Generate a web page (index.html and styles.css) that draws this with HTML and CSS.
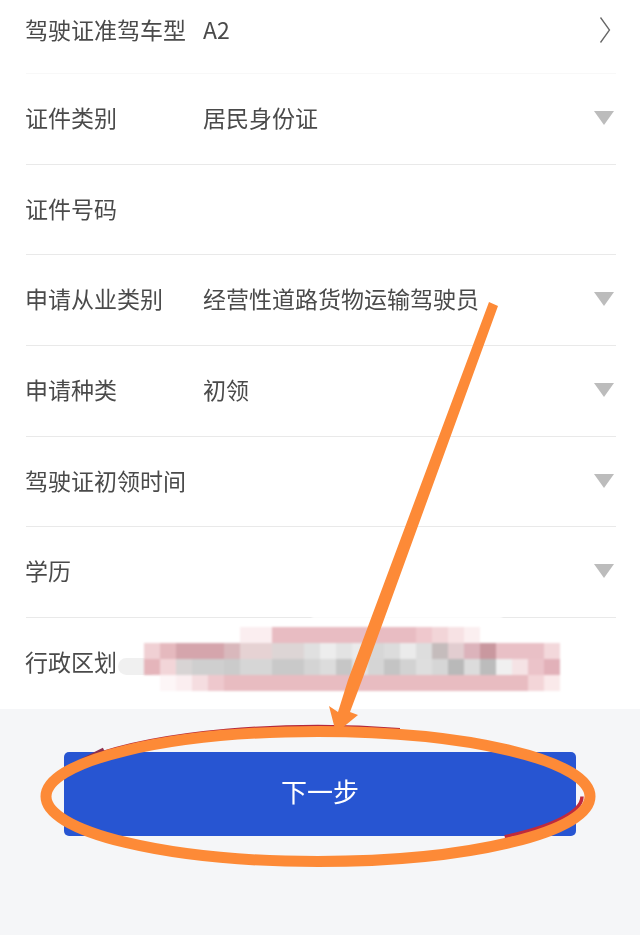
FILE: index.html
```html
<!DOCTYPE html>
<html lang="zh-CN">
<head>
    <meta charset="UTF-8">
    <meta name="viewport" content="width=device-width, initial-scale=1.0">
    <title>从业资格申请</title>
    <link rel="stylesheet" href="styles.css">
</head>
<body>
    <div class="page">
        <form class="apply-form">
            <div class="form-row first-row">
                <span class="row-label">驾驶证准驾车型</span>
                <span class="row-value">A2</span>
                <svg class="chevron" width="12" height="28" viewBox="0 0 12 28"><path d="M1.5 1.5 L10.5 14 L1.5 26.5" fill="none" stroke="#666" stroke-width="1.3"/></svg>
            </div>
            <div class="form-row">
                <span class="row-label">证件类别</span>
                <span class="row-value">居民身份证</span>
                <span class="caret"></span>
            </div>
            <div class="form-row">
                <span class="row-label">证件号码</span>
            </div>
            <div class="form-row">
                <span class="row-label">申请从业类别</span>
                <span class="row-value">经营性道路货物运输驾驶员</span>
                <span class="caret"></span>
            </div>
            <div class="form-row">
                <span class="row-label">申请种类</span>
                <span class="row-value">初领</span>
                <span class="caret"></span>
            </div>
            <div class="form-row">
                <span class="row-label">驾驶证初领时间</span>
                <span class="caret"></span>
            </div>
            <div class="form-row">
                <span class="row-label">学历</span>
                <span class="caret"></span>
            </div>
            <div class="form-row">
                <span class="row-label">行政区划</span>
            </div>
        </form>

        <div class="form-footer">
            <button type="button" class="next-btn"><span>下一步</span></button>
        </div>

        <!-- mosaic over the address, cells are filled in by script.js -->
        <div class="smudge"></div>
        <div class="smear"></div>
        <div class="mosaic" id="mosaic"></div>

        <!-- hand drawn annotation on top of the screenshot -->
        <svg class="annotation" width="640" height="935" viewBox="0 0 640 935">
            <path d="M88 757 A278 71 0 0 1 400 729" fill="none" stroke="#b5283a" stroke-width="2"/>
            <path d="M82 761 L104 750" fill="none" stroke="#8a3050" stroke-width="5"/>
            <path d="M582 796.5 A264 57 0 0 1 504.7 836.8" fill="none" stroke="#c02a3c" stroke-width="3.5"/>
            <ellipse cx="318" cy="796.5" rx="272" ry="65" fill="none" stroke="#fd8a37" stroke-width="11"/>
            <path d="M489 302 L498 306 L362 680 L350 712 L358 715 L336 733 L329 706 L338 712 L348 680 Z" fill="#fd8a37"/>
        </svg>
    </div>
    <script src="script.js"></script>
</body>
</html>
```

FILE: styles.css
```css
* {
    margin: 0;
    padding: 0;
    box-sizing: border-box;
}

body {
    background: #f5f6f8;
    font-family: "Noto Sans CJK SC", "Liberation Sans", sans-serif;
}

.page {
    position: relative;
    width: 640px;
    height: 935px;
    overflow: hidden;
    display: flex;
    flex-direction: column;
}

.apply-form {
    background: white;
    padding: 0 24px 0 26px;
}

.form-row {
    display: flex;
    align-items: center;
    height: 90.7px;
    border-bottom: 1px solid #e9e9e9;
    color: #4a4a4a;
    font-size: 23px;
}

.first-row {
    height: 74px;
    padding-bottom: 14px;
    border-bottom-color: #f8f8f8;
}

.form-row:last-child {
    border-bottom: none;
}

.row-label {
    width: 177px;
    flex-shrink: 0;
    margin-left: -1px;
    padding-bottom: 4px;
    filter: blur(0.35px);
}

.row-value {
    flex: 1;
    margin-left: 1px;
    padding-bottom: 4px;
    filter: blur(0.35px);
}

.first-row .row-label,
.first-row .row-value {
    padding-bottom: 2px;
}

.chevron {
    margin-right: 5px;
}

.caret {
    margin-left: auto;
    margin-right: 2px;
    margin-bottom: 2px;
    width: 0;
    height: 0;
    border-left: 10px solid transparent;
    border-right: 10px solid transparent;
    border-top: 14px solid #bcbcbc;
}

.form-footer {
    flex: 1;
    padding: 43px 64px 0;
}

.next-btn {
    width: 100%;
    height: 84px;
    background: #2755d2;
    color: white;
    border: none;
    border-radius: 5px;
    font-family: inherit;
    font-size: 26px;
}

.next-btn span {
    display: block;
    padding-bottom: 7px;
    filter: blur(0.3px);
}

.mosaic {
    position: absolute;
    left: 144px;
    top: 627px;
    width: 416px;
    height: 64px;
    display: grid;
    grid-template-columns: repeat(26, 16px);
    grid-auto-rows: 16px;
    filter: blur(0.8px);
}

/* the grey end of the blur, runs out past the mosaic on the left */
.smear {
    position: absolute;
    left: 118px;
    top: 658px;
    width: 40px;
    height: 17px;
    background: #f0f0f0;
    border-radius: 9px;
}

/* retouched strip where the divider above the address fades out */
.smudge {
    position: absolute;
    left: 312px;
    top: 614px;
    width: 190px;
    height: 6px;
    background: rgba(255, 255, 255, 0.8);
    filter: blur(1px);
}

.annotation {
    position: absolute;
    left: 0;
    top: 0;
}
```

FILE: script.js
```js
// mosaic colours, one list per row as [number of cells, colour]
const mosaicRows = [
    [[6, 'transparent'], [2, '#fbeef0'], [9, '#e8bcc2'], [1, '#efc8cd'], [1, '#f2d5d8'], [1, '#f7e2e4'], [1, '#fbeff0'], [5, 'transparent']],
    [[1, '#f0d0d4'], [1, '#e5b9be'], [3, '#d5a5ac'], [1, '#d9b8bc'], [2, '#e6d2d3'], [2, '#ddd5d5'], [1, '#e0e0e0'], [1, '#ededed'], [1, '#e3e3e3'], [1, '#ebebeb'], [1, '#d7d7d7'], [1, '#dcdcdc'], [1, '#ebebeb'], [1, '#dddddd'], [1, '#c5bcbc'], [1, '#e2cdd0'], [1, '#dcb3bb'], [1, '#c9989f'], [3, '#e9c0c6'], [1, '#f3d8db']],
    [[1, '#e5b5bb'], [1, '#f2d5d8'], [1, '#d8d4d4'], [2, '#cfcfcf'], [1, '#cbcbcb'], [2, '#d6d6d6'], [2, '#c9c9c9'], [1, '#d4d4d4'], [1, '#dcdcdc'], [1, '#c6c6c6'], [1, '#e2e2e2'], [1, '#d5d5d5'], [1, '#c4c4c4'], [1, '#d2d2d2'], [1, '#dedede'], [1, '#d6d6d6'], [1, '#b9b9b9'], [1, '#dcdcdc'], [1, '#bcbcbc'], [1, '#f0f0f0'], [1, '#f5e3e5'], [1, '#ebc3c9'], [1, '#e2b1b9']],
    [[1, 'transparent'], [1, '#fdf6f7'], [1, '#fbeef0'], [1, '#f5dde0'], [1, '#eec8cd'], [19, '#e8bcc1'], [1, '#f3d5d8'], [1, '#fae9ea']]
];

const mosaic = document.getElementById('mosaic');

mosaicRows.forEach(row => {
    row.forEach(([count, colour]) => {
        for (let i = 0; i < count; i++) {
            const cell = document.createElement('div');
            cell.style.background = colour;
            mosaic.appendChild(cell);
        }
    });
});
```
